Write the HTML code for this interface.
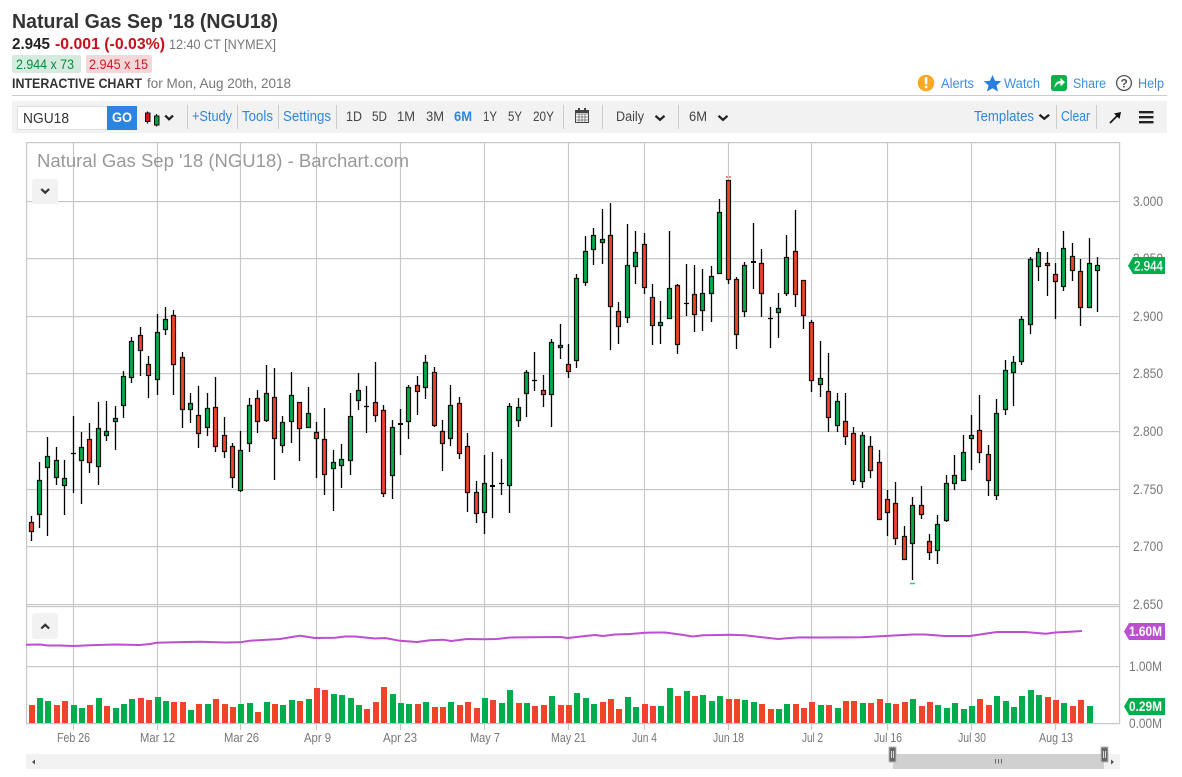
<!DOCTYPE html>
<html><head><meta charset="utf-8"><title>Natural Gas Sep '18 (NGU18)</title>
<style>html,body{margin:0;padding:0;background:#fff}svg{display:block}text{font-family:"Liberation Sans",Arial,sans-serif}</style></head>
<body>
<svg width="1182" height="777" viewBox="0 0 1182 777" xmlns="http://www.w3.org/2000/svg">
<rect width="1182" height="777" fill="#fff"/>
<!-- header -->
<text x="12" y="28" font-size="20" font-weight="700" fill="#333" textLength="266" lengthAdjust="spacingAndGlyphs">Natural Gas Sep '18 (NGU18)</text>
<text x="12" y="49" font-size="16" font-weight="700" fill="#222" textLength="38" lengthAdjust="spacingAndGlyphs">2.945</text>
<text x="55" y="49" font-size="16" font-weight="700" fill="#c8101a" textLength="110" lengthAdjust="spacingAndGlyphs">-0.001 (-0.03%)</text>
<text x="169" y="49" font-size="13.500" fill="#777" textLength="107" lengthAdjust="spacingAndGlyphs">12:40 CT [NYMEX]</text>
<rect x="12" y="55" width="69" height="18" rx="2" fill="#d4ebde"/>
<text x="16" y="69" font-size="13.500" fill="#0b8a40" textLength="58" lengthAdjust="spacingAndGlyphs">2.944 x 73</text>
<rect x="86" y="55" width="66" height="18" rx="2" fill="#f6d7d9"/>
<text x="89" y="69" font-size="13.500" fill="#cc1a20" textLength="59" lengthAdjust="spacingAndGlyphs">2.945 x 15</text>
<text x="12" y="88" font-size="13.500" font-weight="700" fill="#333" textLength="130" lengthAdjust="spacingAndGlyphs">INTERACTIVE CHART</text>
<text x="147" y="88" font-size="13.500" fill="#777" textLength="144" lengthAdjust="spacingAndGlyphs">for Mon, Aug 20th, 2018</text>
<rect x="12" y="95" width="1155" height="1" fill="#ccc"/>
<!-- top right -->
<circle cx="926" cy="83" r="8.300" fill="#f9a825"/><rect x="924.800" y="77" width="2.600" height="7.500" rx="1" fill="#fff"/><circle cx="926.100" cy="87" r="1.400" fill="#fff"/>
<text x="941" y="88" font-size="13.500" fill="#3b8ee0" textLength="33" lengthAdjust="spacingAndGlyphs">Alerts</text>
<path d="M992.500 75l2.500 5.800 6.300.5-4.800 4.100 1.500 6.100-5.500-3.300-5.500 3.300 1.500-6.100-4.800-4.100 6.300-.5z" fill="#2a7fdc"/>
<text x="1004" y="88" font-size="13.500" fill="#3b8ee0" textLength="36" lengthAdjust="spacingAndGlyphs">Watch</text>
<rect x="1051" y="75" width="16" height="16" rx="2.500" fill="#0db14b"/><path d="M1054.500 88c0-4.500 2.500-7 6-7V78l4.500 4.200-4.500 4.200v-3c-2.500 0-4.500 1.300-6 4.600z" fill="#fff"/>
<text x="1073" y="88" font-size="13.500" fill="#3b8ee0" textLength="33" lengthAdjust="spacingAndGlyphs">Share</text>
<circle cx="1124" cy="83" r="7.400" fill="none" stroke="#555" stroke-width="1.300"/>
<text x="1120.500" y="87.500" font-size="12" font-weight="700" fill="#555">?</text>
<text x="1138" y="88" font-size="13.500" fill="#3b8ee0" textLength="26" lengthAdjust="spacingAndGlyphs">Help</text>
<!-- toolbar -->
<rect x="12" y="101" width="1155" height="32" fill="#f2f2f2"/>
<rect x="17.500" y="106.500" width="90" height="23" fill="#fff" stroke="#ddd"/>
<text x="23" y="123" font-size="14.500" fill="#333" textLength="46" lengthAdjust="spacingAndGlyphs">NGU18</text>
<rect x="107" y="106" width="30" height="24" fill="#2a84e0"/>
<text x="112" y="122" font-size="13.500" font-weight="700" fill="#fff" textLength="20" lengthAdjust="spacingAndGlyphs">GO</text>
<path d="M147.500 111.500v12M156.500 114v12.500" stroke="#111" stroke-width="1.200"/>
<rect x="145.500" y="113" width="4.500" height="8.500" fill="#d8131a" stroke="#111"/>
<rect x="154.500" y="116" width="4.500" height="9" fill="#0a9a45" stroke="#111"/>
<path d="M165.200 115.600l3.900 3.700 3.900-3.700" fill="none" stroke="#222" stroke-width="2.300"/>
<path d="M187.500 105v24M237.500 105v24M278.500 105v24M336.500 105v24M563.500 105v24M602.500 105v24M678.500 105v24M1056.500 105v24M1096.500 105v24" stroke="#ccc"/>
<g font-size="14.500" fill="#2e86de">
<text x="192" y="121" textLength="40" lengthAdjust="spacingAndGlyphs">+Study</text>
<text x="242" y="121" textLength="31" lengthAdjust="spacingAndGlyphs">Tools</text>
<text x="283" y="121" textLength="48" lengthAdjust="spacingAndGlyphs">Settings</text>
<text x="974" y="121" textLength="60" lengthAdjust="spacingAndGlyphs">Templates</text>
<text x="1061" y="121" textLength="29" lengthAdjust="spacingAndGlyphs">Clear</text>
</g>
<g font-size="13.500" fill="#444">
<text x="346" y="121" textLength="16" lengthAdjust="spacingAndGlyphs">1D</text>
<text x="372" y="121" textLength="15" lengthAdjust="spacingAndGlyphs">5D</text>
<text x="397" y="121" textLength="18" lengthAdjust="spacingAndGlyphs">1M</text>
<text x="426" y="121" textLength="18" lengthAdjust="spacingAndGlyphs">3M</text>
<text x="454" y="121" font-weight="700" fill="#2e86de" textLength="18" lengthAdjust="spacingAndGlyphs">6M</text>
<text x="483" y="121" textLength="14" lengthAdjust="spacingAndGlyphs">1Y</text>
<text x="508" y="121" textLength="14" lengthAdjust="spacingAndGlyphs">5Y</text>
<text x="533" y="121" textLength="21" lengthAdjust="spacingAndGlyphs">20Y</text>
<text x="616" y="121" textLength="28" lengthAdjust="spacingAndGlyphs">Daily</text>
<text x="689" y="121" textLength="18" lengthAdjust="spacingAndGlyphs">6M</text>
</g>
<!-- calendar -->
<rect x="575.500" y="110.500" width="13" height="12" fill="#fff" stroke="#444"/>
<path d="M575.500 114h13M575.500 117h13M575.500 120h13M579 114v8M582 114v8M585 114v8" stroke="#666" stroke-width=".8"/>
<rect x="575.500" y="110" width="13" height="3" fill="#444"/>
<path d="M579 108v3M585 108v3" stroke="#444" stroke-width="2"/>
<g fill="none" stroke="#222" stroke-width="2.300">
<path d="M655.500 115.800l4.500 4 4.500-4M718.500 115.800l4.500 4 4.500-4M1039.500 114.800l4.800 4 4.800-4"/>
</g>
<path d="M1110 123l9-9" stroke="#111" stroke-width="1.600"/><path d="M1121 112l-7 1.500 5.500 5.500z" fill="#111"/>
<path d="M1139 112.200h14.500M1139 117.200h14.500M1139 122.200h14.500" stroke="#222" stroke-width="2.400"/>
<!-- chart grid -->
<g fill="#c8c8c8">
<rect x="26" y="142" width="1094" height="1.200"/>
<rect x="26" y="201" width="1094" height="1.200"/><rect x="26" y="258" width="1094" height="1.200"/><rect x="26" y="316" width="1094" height="1.200"/><rect x="26" y="373" width="1094" height="1.200"/><rect x="26" y="431" width="1094" height="1.200"/><rect x="26" y="489" width="1094" height="1.200"/><rect x="26" y="546" width="1094" height="1.200"/><rect x="26" y="604" width="1094" height="1.200"/><rect x="26" y="606" width="1094" height="1.200"/><rect x="26" y="666" width="1094" height="1.200"/><rect x="26" y="723" width="1094" height="1.200"/>
<rect x="26" y="142" width="1.200" height="582"/><rect x="1119" y="142" width="1.200" height="582"/>
</g>
<path d="M73.500 142V730M157.500 142V730M240.500 142V730M316.500 142V730M400.500 142V730M484.500 142V730M568.500 142V730M644.500 142V730M728.500 142V730M811.500 142V730M887.500 142V730M971.500 142V730M1055.500 142V730" stroke="#c8c8c8" stroke-width="1.200" fill="none"/>
<!-- chart title / buttons -->
<text x="37" y="167" font-size="18.500" fill="#999" textLength="372" lengthAdjust="spacingAndGlyphs">Natural Gas Sep '18 (NGU18) - Barchart.com</text>
<rect x="32" y="179" width="26" height="25" rx="3" fill="#f2f2f2"/><path d="M41.300 189l3.900 3.700 3.900-3.700" fill="none" stroke="#333" stroke-width="2.200"/>
<rect x="32" y="613" width="26" height="26" rx="3" fill="#f2f2f2"/><path d="M41.300 628.500l3.900-3.700 3.900 3.700" fill="none" stroke="#333" stroke-width="2.200"/>
<!-- wicks -->
<path stroke="#000" stroke-width="1.300" fill="none" d="M31.500 516V541M39.500 462V528M47.500 437V536M56.500 447V485M64.500 460V515M73.500 416V493M81.500 432V504M89.500 423V473M98.500 402V485M106.500 401V441M115.500 406V450M123.500 371V418M131.500 337V383M140.500 327V376M148.500 356V398M157.500 314V395M165.500 307V335M173.500 310V395M182.500 352V428M190.500 393V423M198.500 386V448M207.500 393V436M215.500 377V452M224.500 417V458M232.500 443V488M240.500 431V492M249.500 398V452M257.500 390V433M266.500 365V422M274.500 368V480M282.500 416V453M291.500 372V443M299.500 402V461M308.500 387V427M316.500 422V478M324.500 408V495M333.500 450V511M341.500 444V488M350.500 393V475M358.500 373V410M366.500 386V433M375.500 362V422M383.500 405V497M392.500 420V499M400.500 409V455M408.500 385V439M417.500 376V415M425.500 355V399M434.500 367V427M442.500 420V471M450.500 385V446M459.500 397V459M467.500 433V512M476.500 481V523M484.500 455V534M492.500 452V518M501.500 459V495M509.500 403V513M518.500 398V427M526.500 370V417M534.500 352V391M543.500 375V407M551.500 339V427M560.500 324V359M568.500 344V378M576.500 274V368M585.500 236V286M593.500 228V265M602.500 209V264M610.500 203V350M618.500 302V344M627.500 224V323M635.500 231V284M644.500 233V294M652.500 284V345M660.500 301V344M669.500 231V318M677.500 284V354M686.500 264V316M694.500 265V332M702.500 269V331M711.500 266V322M719.500 199V273M728.500 180V284M736.500 277V349M744.500 262V317M753.500 223V289M761.500 249V317M770.500 307V348M778.500 293V338M786.500 235V296M795.500 210V307M803.500 280V329M811.500 320V392M820.500 341V397M828.500 353V432M837.500 393V432M845.500 393V445M853.500 427V485M862.500 432V488M870.500 436V478M879.500 450V519M887.500 490V536M895.500 482V545M904.500 526V559M912.500 497V580M921.500 486V519M929.500 534V560M937.500 515V564M946.500 475V522M954.500 455V490M963.500 435V480M971.500 415V470M979.500 395V463M988.500 445V496M996.500 399V500M1005.500 360V415M1013.500 356V406M1021.500 316V365M1030.500 257V334M1038.500 248V281M1047.500 252V296M1055.500 263V319M1063.500 231V291M1072.500 243V281M1080.500 259V326M1089.500 238V307M1097.500 257V312"/>
<!-- doji -->
<path stroke="#000" stroke-width="1.200" d="M71 453.500h5M364 406.500h5M499 483.500h5M532 380.500h5M684 303.500h5M768 318.500h5"/>
<path stroke="#000" stroke-width="2" d="M398 424h5M490 486h5M751 262h5"/>
<!-- red bodies -->
<path fill="#ef4429" stroke="#111" stroke-width="1.200" d="M29.500 522.500h4V531.500h-4zM87.500 439.500h4V462.500h-4zM138.500 335.500h4V350.500h-4zM146.500 364.500h4V375.500h-4zM171.500 315.500h4V364.500h-4zM180.500 357.500h4V409.500h-4zM196.500 415.500h4V433.500h-4zM213.500 407.500h4V446.500h-4zM222.500 435.500h4V451.500h-4zM230.500 446.500h4V477.500h-4zM255.500 398.500h4V421.500h-4zM272.500 397.500h4V438.500h-4zM297.500 402.500h4V428.500h-4zM314.500 432.500h4V438.500h-4zM322.500 439.500h4V474.500h-4zM373.500 402.500h4V415.500h-4zM381.500 410.500h4V493.500h-4zM415.500 385.500h4V391.500h-4zM432.500 372.500h4V425.500h-4zM440.500 431.500h4V443.500h-4zM457.500 403.500h4V453.500h-4zM465.500 446.500h4V492.500h-4zM474.500 492.500h4V513.500h-4zM541.500 390.500h4V394.500h-4zM566.500 364.500h4V371.500h-4zM608.500 235.500h4V306.500h-4zM616.500 311.500h4V326.500h-4zM642.500 244.500h4V287.500h-4zM650.500 297.500h4V325.500h-4zM675.500 285.500h4V344.500h-4zM692.500 294.500h4V314.500h-4zM726.500 180.500h4V279.500h-4zM734.500 279.500h4V334.500h-4zM759.500 263.500h4V293.500h-4zM793.500 251.500h4V294.500h-4zM801.500 280.500h4V315.500h-4zM809.500 322.500h4V380.500h-4zM826.500 391.500h4V417.500h-4zM843.500 421.500h4V436.500h-4zM851.500 433.500h4V480.500h-4zM868.500 446.500h4V470.500h-4zM877.500 462.500h4V519.500h-4zM885.500 499.500h4V512.500h-4zM893.500 503.500h4V538.500h-4zM902.500 536.500h4V559.500h-4zM919.500 505.500h4V514.500h-4zM927.500 541.500h4V552.500h-4zM977.500 430.500h4V452.500h-4zM986.500 454.500h4V480.500h-4zM1045.500 263.500h4V265.500h-4zM1053.500 274.500h4V281.500h-4zM1070.500 256.500h4V270.500h-4zM1078.500 271.500h4V307.500h-4z"/>
<!-- green bodies -->
<path fill="#00ad4c" stroke="#111" stroke-width="1.200" d="M37.500 480.500h4V514.500h-4zM45.500 456.500h4V467.500h-4zM54.500 460.500h4V477.500h-4zM62.500 478.500h4V485.500h-4zM79.500 447.500h4V460.500h-4zM96.500 428.500h4V466.500h-4zM104.500 431.500h4V435.500h-4zM113.500 418.500h4V421.500h-4zM121.500 376.500h4V405.500h-4zM129.500 341.500h4V377.500h-4zM155.500 332.500h4V379.500h-4zM163.500 319.500h4V329.500h-4zM188.500 403.500h4V409.500h-4zM205.500 408.500h4V427.500h-4zM238.500 450.500h4V490.500h-4zM247.500 405.500h4V443.500h-4zM264.500 393.500h4V420.500h-4zM280.500 422.500h4V445.500h-4zM289.500 395.500h4V421.500h-4zM306.500 413.500h4V427.500h-4zM331.500 462.500h4V468.500h-4zM339.500 459.500h4V465.500h-4zM348.500 416.500h4V460.500h-4zM356.500 390.500h4V400.500h-4zM390.500 427.500h4V475.500h-4zM406.500 387.500h4V421.500h-4zM423.500 362.500h4V387.500h-4zM448.500 405.500h4V438.500h-4zM482.500 483.500h4V512.500h-4zM507.500 406.500h4V485.500h-4zM516.500 407.500h4V420.500h-4zM524.500 372.500h4V393.500h-4zM549.500 342.500h4V394.500h-4zM558.500 345.500h4V347.500h-4zM574.500 278.500h4V360.500h-4zM583.500 251.500h4V282.500h-4zM591.500 235.500h4V249.500h-4zM600.500 239.500h4V242.500h-4zM625.500 265.500h4V317.500h-4zM633.500 252.500h4V266.500h-4zM658.500 322.500h4V325.500h-4zM667.500 288.500h4V318.500h-4zM700.500 293.500h4V310.500h-4zM709.500 276.500h4V293.500h-4zM717.500 212.500h4V273.500h-4zM742.500 265.500h4V311.500h-4zM776.500 308.500h4V312.500h-4zM784.500 257.500h4V293.500h-4zM818.500 378.500h4V384.500h-4zM835.500 401.500h4V425.500h-4zM860.500 435.500h4V481.500h-4zM910.500 505.500h4V543.500h-4zM935.500 524.500h4V550.500h-4zM944.500 483.500h4V520.500h-4zM952.500 475.500h4V483.500h-4zM961.500 452.500h4V480.500h-4zM969.500 435.500h4V438.500h-4zM994.500 413.500h4V495.500h-4zM1003.500 370.500h4V409.500h-4zM1011.500 362.500h4V372.500h-4zM1019.500 319.500h4V361.500h-4zM1028.500 259.500h4V324.500h-4zM1036.500 252.500h4V266.500h-4zM1061.500 248.500h4V286.500h-4zM1087.500 263.500h4V307.500h-4zM1095.500 265.500h4V270.500h-4z"/>
<!-- hi/lo markers -->
<path d="M726 177h2M729 177h2" stroke="#f08a80" stroke-width="2"/>
<path d="M910 583.500h5" stroke="#3cc07a" stroke-width="1.500"/>
<!-- volume red -->
<path fill="#ef4429" d="M29 705h6V723h-6zM54 705h6V723h-6zM62 701h6V723h-6zM87 705h6V723h-6zM104 706h6V723h-6zM138 698h6V723h-6zM146 700h6V723h-6zM171 702h6V723h-6zM180 702h6V723h-6zM196 704h6V723h-6zM213 699h6V723h-6zM222 704h6V723h-6zM230 707h6V723h-6zM255 712h6V723h-6zM272 704h6V723h-6zM297 701h6V723h-6zM314 688h6V723h-6zM322 690h6V723h-6zM364 709h6V723h-6zM373 702h6V723h-6zM381 687h6V723h-6zM415 704h6V723h-6zM432 707h6V723h-6zM440 707h6V723h-6zM457 705h6V723h-6zM465 702h6V723h-6zM474 708h6V723h-6zM490 700h6V723h-6zM516 703h6V723h-6zM532 706h6V723h-6zM541 705h6V723h-6zM558 705h6V723h-6zM566 705h6V723h-6zM600 702h6V723h-6zM608 699h6V723h-6zM616 709h6V723h-6zM642 704h6V723h-6zM650 706h6V723h-6zM675 696h6V723h-6zM692 696h6V723h-6zM726 699h6V723h-6zM734 699h6V723h-6zM759 704h6V723h-6zM768 709h6V723h-6zM793 704h6V723h-6zM801 708h6V723h-6zM809 702h6V723h-6zM826 705h6V723h-6zM843 701h6V723h-6zM851 701h6V723h-6zM868 703h6V723h-6zM877 699h6V723h-6zM893 704h6V723h-6zM902 702h6V723h-6zM919 706h6V723h-6zM927 702h6V723h-6zM977 699h6V723h-6zM986 705h6V723h-6zM1045 697h6V723h-6zM1053 700h6V723h-6zM1070 706h6V723h-6zM1078 700h6V723h-6z"/>
<!-- volume green -->
<path fill="#00ad4c" d="M37 698h6V723h-6zM45 701h6V723h-6zM71 705h6V723h-6zM79 708h6V723h-6zM96 698h6V723h-6zM113 708h6V723h-6zM121 704h6V723h-6zM129 699h6V723h-6zM155 697h6V723h-6zM163 701h6V723h-6zM188 710h6V723h-6zM205 704h6V723h-6zM238 704h6V723h-6zM247 703h6V723h-6zM264 702h6V723h-6zM280 705h6V723h-6zM289 700h6V723h-6zM306 699h6V723h-6zM331 694h6V723h-6zM339 695h6V723h-6zM348 698h6V723h-6zM356 705h6V723h-6zM390 694h6V723h-6zM398 703h6V723h-6zM406 704h6V723h-6zM423 702h6V723h-6zM448 702h6V723h-6zM482 698h6V723h-6zM499 703h6V723h-6zM507 690h6V723h-6zM524 703h6V723h-6zM549 696h6V723h-6zM574 693h6V723h-6zM583 698h6V723h-6zM591 704h6V723h-6zM625 697h6V723h-6zM633 707h6V723h-6zM658 706h6V723h-6zM667 688h6V723h-6zM684 691h6V723h-6zM700 695h6V723h-6zM709 701h6V723h-6zM717 696h6V723h-6zM742 700h6V723h-6zM751 702h6V723h-6zM776 709h6V723h-6zM784 704h6V723h-6zM818 705h6V723h-6zM835 708h6V723h-6zM860 703h6V723h-6zM885 703h6V723h-6zM910 699h6V723h-6zM935 705h6V723h-6zM944 708h6V723h-6zM952 703h6V723h-6zM961 709h6V723h-6zM969 706h6V723h-6zM994 696h6V723h-6zM1003 701h6V723h-6zM1011 707h6V723h-6zM1019 696h6V723h-6zM1028 690h6V723h-6zM1036 695h6V723h-6zM1061 703h6V723h-6zM1087 706h6V723h-6z"/>
<!-- purple line -->
<polyline fill="none" stroke="#bb4fcf" stroke-width="2" stroke-linejoin="round" points="26,644.700 40,644.500 48,645.500 60,645.500 73,646 90,645.300 115,644.500 140,645 150,644 157,642.700 175,642.300 200,641.700 225,642.500 240,642.300 250,640.700 280,639 300,635.700 315,638 335,637.800 345,636.500 355,636.500 375,638.500 385,638 400,640.800 417,642 430,640.300 443,639.700 451,641 467,639 484,639.200 497,639 510,637.500 530,637.200 560,637 568,638 590,635.500 595,635 603,636 615,634.500 630,634 645,632.800 655,632.500 665,632.500 680,634.500 693,636.500 703,635.300 720,635 730,634.700 745,635.300 760,637 778,639 790,638 800,637.400 820,637.500 862,637.300 880,636.300 913,634.500 925,634.500 945,636 970,636 990,633 997,632 1025,632 1046,633.700 1055,632.500 1070,631.700 1082,631"/>
<!-- right axis -->
<g font-size="13.500" fill="#777">
<text x="1133" y="206" textLength="30" lengthAdjust="spacingAndGlyphs">3.000</text>
<text x="1133" y="263" textLength="30" lengthAdjust="spacingAndGlyphs">2.950</text>
<text x="1133" y="321" textLength="30" lengthAdjust="spacingAndGlyphs">2.900</text>
<text x="1133" y="378" textLength="30" lengthAdjust="spacingAndGlyphs">2.850</text>
<text x="1133" y="436" textLength="30" lengthAdjust="spacingAndGlyphs">2.800</text>
<text x="1133" y="494" textLength="30" lengthAdjust="spacingAndGlyphs">2.750</text>
<text x="1133" y="551" textLength="30" lengthAdjust="spacingAndGlyphs">2.700</text>
<text x="1133" y="609" textLength="30" lengthAdjust="spacingAndGlyphs">2.650</text>
<text x="1129" y="671" textLength="33" lengthAdjust="spacingAndGlyphs">1.00M</text>
<text x="1129" y="728" textLength="33" lengthAdjust="spacingAndGlyphs">0.00M</text>
</g>
<path d="M1128 265.700l5-8.700h32v17h-32z" fill="#00ad4c"/>
<text x="1134" y="270.500" font-size="13.500" fill="#fff" stroke="#fff" stroke-width=".25" textLength="29" lengthAdjust="spacingAndGlyphs">2.944</text>
<path d="M1124 631.500l5-8.500h36v17h-36z" fill="#bb4fcf"/>
<text x="1129" y="636" font-size="13.500" font-weight="700" fill="#fff" textLength="33" lengthAdjust="spacingAndGlyphs">1.60M</text>
<path d="M1124 706.500l5-8.500h36v17h-36z" fill="#00ad4c"/>
<text x="1129" y="711" font-size="13.500" font-weight="700" fill="#fff" textLength="33" lengthAdjust="spacingAndGlyphs">0.29M</text>
<!-- date axis -->
<g font-size="13" fill="#777">
<text x="57" y="742" textLength="33" lengthAdjust="spacingAndGlyphs">Feb 26</text>
<text x="140" y="742" textLength="35" lengthAdjust="spacingAndGlyphs">Mar 12</text>
<text x="224" y="742" textLength="35" lengthAdjust="spacingAndGlyphs">Mar 26</text>
<text x="304" y="742" textLength="27" lengthAdjust="spacingAndGlyphs">Apr 9</text>
<text x="383" y="742" textLength="34" lengthAdjust="spacingAndGlyphs">Apr 23</text>
<text x="470" y="742" textLength="30" lengthAdjust="spacingAndGlyphs">May 7</text>
<text x="551" y="742" textLength="35" lengthAdjust="spacingAndGlyphs">May 21</text>
<text x="632" y="742" textLength="25" lengthAdjust="spacingAndGlyphs">Jun 4</text>
<text x="713" y="742" textLength="31" lengthAdjust="spacingAndGlyphs">Jun 18</text>
<text x="802" y="742" textLength="21" lengthAdjust="spacingAndGlyphs">Jul 2</text>
<text x="874" y="742" textLength="28" lengthAdjust="spacingAndGlyphs">Jul 16</text>
<text x="958" y="742" textLength="28" lengthAdjust="spacingAndGlyphs">Jul 30</text>
<text x="1039" y="742" textLength="34" lengthAdjust="spacingAndGlyphs">Aug 13</text>
</g>
<!-- scrollbar -->
<rect x="26" y="754" width="1094" height="15" fill="#f2f2f2"/>
<rect x="893" y="754" width="211" height="15" fill="#d0d0d0"/>
<path d="M35 759.500v5l-3-2.500zM1111 759.500v5l3-2.500z" fill="#555"/>
<path d="M995.500 759v4.500M998.500 759v4.500M1001.500 759v4.500" stroke="#666"/>
<rect x="889" y="747" width="7" height="15" fill="#666" stroke="#bbb"/>
<rect x="1101" y="747" width="7" height="15" fill="#666" stroke="#bbb"/>
<path d="M891.500 751v7M893.500 751v7M1103.500 751v7M1105.500 751v7" stroke="#ddd"/>
</svg>
</body></html>
